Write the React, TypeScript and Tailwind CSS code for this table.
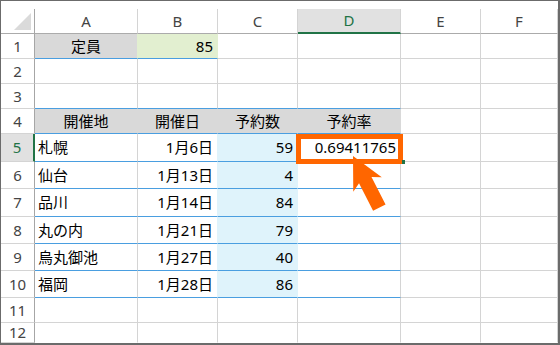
import React from 'react';

type Align = 'left' | 'center' | 'right';

interface CellProps {
  children?: React.ReactNode;
  r?: string;
  b?: string;
  bg?: string;
  align?: Align;
}

const gridR = 'border-r-[#d4d4d4]';
const gridB = 'border-b-[#d4d4d4]';
const blueB = 'border-b-[#4a9ee0]';

const alignClass: Record<Align, string> = {
  left: 'justify-start pl-[3px]',
  center: 'justify-center',
  right: 'justify-end pr-[4px]',
};

function Cell({ children, r = gridR, b = gridB, bg = 'bg-white', align = 'left' }: CellProps) {
  return (
    <div
      className={`flex items-center whitespace-nowrap border-r border-b text-black ${r} ${b} ${bg} ${alignClass[align]}`}
    >
      {children}
    </div>
  );
}

function RowHead({ n, active }: { n: number; active?: boolean }) {
  return active ? (
    <div className="flex items-center justify-center border-b border-b-[#d4d4d4] border-r-2 border-r-[#217346] bg-[#e1e1e1] text-[#217346]">
      {n}
    </div>
  ) : (
    <div className="flex items-center justify-center border-b border-r border-b-[#d4d4d4] border-r-[#a6a6a6] text-[#444]">
      {n}
    </div>
  );
}

const rowGrid = 'grid grid-cols-[34px_103px_80px_80px_103px_80px_77px]';

const venues = [
  { place: '札幌', date: '1月6日', count: 59, h: 'h-[28px]' },
  { place: '仙台', date: '1月13日', count: 4, h: 'h-[27px]' },
  { place: '品川', date: '1月14日', count: 84, h: 'h-[28px]' },
  { place: '丸の内', date: '1月21日', count: 79, h: 'h-[27px]' },
  { place: '烏丸御池', date: '1月27日', count: 40, h: 'h-[27px]' },
  { place: '福岡', date: '1月28日', count: 86, h: 'h-[27px]' },
];

export default function App() {
  return (
    <div className="relative h-[345px] w-[560px] overflow-hidden border-t border-l border-r-2 border-b-2 border-[#6b6b6b] bg-white pt-[8px] font-['Noto_Sans','Noto_Sans_CJK_JP',sans-serif] text-[15px] leading-none">
      {/* column letters */}
      <div className={`${rowGrid} h-[25px]`}>
        <div className="flex items-end justify-end border-r border-b border-r-[#a6a6a6] border-b-[#ababab] pr-[3px] pb-[3px]">
          <svg width="17" height="17" viewBox="0 0 17 17">
            <polygon points="17,0 17,17 0,17" fill="#dadada" />
          </svg>
        </div>
        {['A', 'B', 'C', 'D', 'E', 'F'].map((c) =>
          c === 'D' ? (
            <div
              key={c}
              className="flex items-center justify-center border-r border-b-2 border-r-[#d4d4d4] border-b-[#217346] bg-[#e1e1e1] text-[#217346]"
            >
              {c}
            </div>
          ) : (
            <div
              key={c}
              className="flex items-center justify-center border-r border-b border-r-[#d4d4d4] border-b-[#ababab] text-[#444]"
            >
              {c}
            </div>
          ),
        )}
      </div>

      {/* capacity */}
      <div className={`${rowGrid} h-[25px]`}>
        <RowHead n={1} />
        <Cell bg="bg-[#d9d9d9]" r="border-r-[#e2efd0]" b={blueB} align="center">
          定員
        </Cell>
        <Cell bg="bg-[#e2efd0]" r="border-r-[#e2efd0]" b={blueB} align="right">
          85
        </Cell>
        <Cell />
        <Cell />
        <Cell />
        <Cell />
      </div>

      {[2, 3].map((n) => (
        <div key={n} className={`${rowGrid} h-[25px]`}>
          <RowHead n={n} />
          <Cell b={n === 3 ? blueB : gridB} />
          <Cell b={n === 3 ? blueB : gridB} />
          <Cell b={n === 3 ? blueB : gridB} />
          <Cell b={n === 3 ? blueB : gridB} />
          <Cell />
          <Cell />
        </div>
      ))}

      {/* table header */}
      <div className={`${rowGrid} h-[25px]`}>
        <RowHead n={4} />
        {['開催地', '開催日', '予約数', '予約率'].map((t) => (
          <Cell key={t} bg="bg-[#d9d9d9]" r="border-r-[#d9d9d9]" b={blueB} align="center">
            {t}
          </Cell>
        ))}
        <Cell />
        <Cell />
      </div>

      {venues.map((v, i) => (
        <div key={v.place} className={`${rowGrid} ${v.h}`}>
          <RowHead n={i + 5} active={i === 0} />
          <Cell b={blueB}>{v.place}</Cell>
          <Cell b={blueB} r="border-r-[#dff3fb]" align="right">
            {v.date}
          </Cell>
          <Cell b={blueB} r="border-r-[#dff3fb]" bg="bg-[#dff3fb]" align="right">
            {v.count}
          </Cell>
          <Cell b={blueB} align="right">
            {i === 0 ? '0.69411765' : null}
          </Cell>
          <Cell />
          <Cell />
        </div>
      ))}

      <div className={`${rowGrid} h-[25px]`}>
        <RowHead n={11} />
        <Cell />
        <Cell />
        <Cell />
        <Cell />
        <Cell />
        <Cell />
      </div>
      <div className={`${rowGrid} h-[20px]`}>
        <RowHead n={12} />
        <Cell b="border-b-transparent" />
        <Cell b="border-b-transparent" />
        <Cell b="border-b-transparent" />
        <Cell b="border-b-transparent" />
        <Cell b="border-b-transparent" />
        <Cell b="border-b-transparent" />
      </div>

      {/* selected cell highlight + fill handle */}
      <div className="absolute left-[295px] top-[133px] h-[30px] w-[107px] border-[5px] border-[#ff6600]" />
      <div className="absolute left-[401px] top-[159px] h-[4px] w-[3px] bg-[#217346]" />

      {/* pointer arrow */}
      <svg className="absolute left-[336px] top-[149px]" width="60" height="72" viewBox="0 0 60 72">
        <g transform="translate(16 6) rotate(-27)">
          <polygon points="0,0 16,32 7,27 7,58 -7,58 -7,27 -16,32" fill="#ff6600" />
        </g>
      </svg>
    </div>
  );
}
